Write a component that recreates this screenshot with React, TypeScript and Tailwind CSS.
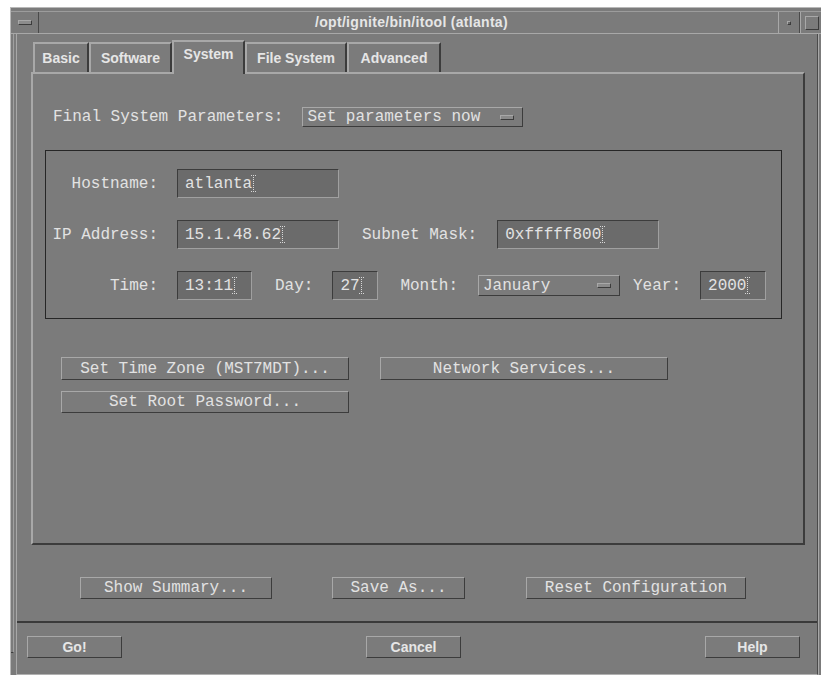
import React from 'react';

const mono = "font-['Liberation_Mono',monospace] text-[16px] text-[#e2e2e2]";
const sans = "font-['Liberation_Sans',Arial,sans-serif] font-bold text-[14px] text-[#e6e6e6]";
const raised = 'border border-t-[#a8a8a8] border-l-[#a8a8a8] border-b-[#3c3c3c] border-r-[#3c3c3c]';
const sunken = 'border border-t-[#3c3c3c] border-l-[#3c3c3c] border-b-[#a0a0a0] border-r-[#a0a0a0]';

const IBeam = () => (
  <svg width="5" height="17" viewBox="0 0 5 17" className="shrink-0 -ml-[1px]">
    <path d="M0 0.5h5M0 16.5h5M2.5 0v17" stroke="#d8d8d8" strokeWidth="1" strokeDasharray="1 1" />
  </svg>
);

const Field = ({ value, w }: { value: string; w: string }) => (
  <div className={`${sunken} ${w} h-[29px] bg-[#6b6b6b] flex items-center pl-[7px]`}>
    <span className={mono}>{value}</span>
    <IBeam />
  </div>
);

const OptionMenu = ({ value, w, h }: { value: string; w: string; h: string }) => (
  <div className={`${raised} ${w} ${h} flex items-center justify-between pl-[4px] pr-[8px]`}>
    <span className={`${mono} leading-none`}>{value}</span>
    <span className={`${raised} w-[14px] h-[5px] bg-[#8a8a8a]`} />
  </div>
);

const Button = ({ label, w, h = 'h-[23px]', bold = false }: { label: string; w: string; h?: string; bold?: boolean }) => (
  <div className={`${raised} ${w} ${h} flex items-center justify-center whitespace-pre ${bold ? sans : mono}`}>
    {label}
  </div>
);

const tabs = [
  { name: 'Basic', w: 'w-[56px]' },
  { name: 'Software', w: 'w-[83px]' },
  { name: 'System', w: 'w-[73px]', active: true },
  { name: 'File System', w: 'w-[102px]' },
  { name: 'Advanced', w: 'w-[94px]' },
];

export default function App() {
  return (
    <div className="w-[821px] h-[675px] bg-white pl-[10px] pt-[7px] overflow-hidden">
      <div className="w-[813px] h-[668px] bg-[#7b7b7b] border-l border-t border-[#b8b8b8] flex flex-col">
        {/* window frame top */}
        <div className="h-[4px] border-b border-[#9c9c9c]" />

        {/* title bar */}
        <div className="h-[22px] flex border-b border-[#a8a8a8]">
          <div className="w-[28px] border-r border-[#4a4a4a] flex items-center justify-center">
            <span className={`${raised} w-[14px] h-[5px] bg-[#8c8c8c]`} />
          </div>
          <div className={`flex-1 flex items-center justify-center pl-[6px] ${sans} tracking-[0.3px]`}>
            /opt/ignite/bin/itool (atlanta)
          </div>
          <div className="w-[22px] border-l border-[#a8a8a8] border-r border-r-[#4a4a4a] flex items-center justify-center">
            <span className={`${raised} w-[4px] h-[4px] bg-[#6a6a6a]`} />
          </div>
          <div className="w-[23px] border-l border-[#a8a8a8] flex items-center pl-[4px]">
            <span className={`${raised} w-[14px] h-[14px]`} />
          </div>
        </div>

        <div className="flex-1 flex">
          {/* left frame */}
          <div className="w-[6px] border-r border-[#a8a8a8] flex flex-col">
            <div className="flex-1 border-b border-[#3c3c3c] mr-[2px] border-r border-r-[#a0a0a0]" />
            <div className="h-[22px]" />
          </div>

          {/* client area */}
          <div className="w-[801px] flex flex-col border-r border-[#4a4a4a] border-b border-b-[#b0b0b0]">
            {/* tab row */}
            <div className="h-[38px] flex items-end pl-[16px] relative z-10">
              {tabs.map((t) =>
                t.active ? (
                  <div
                    key={t.name}
                    className={`${t.w} h-[34px] -mb-[2px] bg-[#7b7b7b] border-2 border-b-0 border-t-[#a8a8a8] border-l-[#a8a8a8] border-r-[#3c3c3c] flex items-start justify-center pt-[2px] ${sans}`}
                  >
                    {t.name}
                  </div>
                ) : (
                  <div
                    key={t.name}
                    className={`${t.w} h-[30px] border-2 border-b-0 border-t-[#a8a8a8] border-l-[#a8a8a8] border-r-[#3c3c3c] flex items-center justify-center ${sans}`}
                  >
                    {t.name}
                  </div>
                )
              )}
            </div>

            {/* System page */}
            <div className="ml-[14px] w-[774px] h-[473px] border-2 border-t-[#a8a8a8] border-l-[#a8a8a8] border-b-[#3c3c3c] border-r-[#3c3c3c] pt-[33px] pl-[12px]">
              <div className="flex items-center h-[20px] pl-[8px]">
                <span className={`${mono} whitespace-pre`}>Final System Parameters:</span>
                <div className="ml-[19px]">
                  <OptionMenu value="Set parameters now" w="w-[221px]" h="h-[20px]" />
                </div>
              </div>

              <div className="mt-[23px] w-[737px] h-[169px] border border-[#262626] pt-[18px] flex flex-col gap-[22px]">
                <div className="flex items-center">
                  <span className={`${mono} w-[112px] text-right`}>Hostname:</span>
                  <div className="ml-[19px]">
                    <Field value="atlanta" w="w-[162px]" />
                  </div>
                </div>
                <div className="flex items-center">
                  <span className={`${mono} w-[112px] text-right whitespace-pre`}>IP Address:</span>
                  <div className="ml-[19px]">
                    <Field value="15.1.48.62" w="w-[162px]" />
                  </div>
                  <span className={`${mono} ml-[23px] whitespace-pre`}>Subnet Mask:</span>
                  <div className="ml-[20px]">
                    <Field value="0xfffff800" w="w-[162px]" />
                  </div>
                </div>
                <div className="flex items-center">
                  <span className={`${mono} w-[112px] text-right`}>Time:</span>
                  <div className="ml-[19px]">
                    <Field value="13:11" w="w-[75px]" />
                  </div>
                  <span className={`${mono} ml-[23px]`}>Day:</span>
                  <div className="ml-[19px]">
                    <Field value="27" w="w-[46px]" />
                  </div>
                  <span className={`${mono} ml-[22px]`}>Month:</span>
                  <div className="ml-[20px]">
                    <OptionMenu value="January" w="w-[142px]" h="h-[21px]" />
                  </div>
                  <span className={`${mono} ml-[13px]`}>Year:</span>
                  <div className="ml-[19px]">
                    <Field value="2000" w="w-[66px]" />
                  </div>
                </div>
              </div>

              <div className="mt-[38px] ml-[16px] flex flex-col gap-[11px]">
                <div className="flex gap-[31px]">
                  <Button label="Set Time Zone (MST7MDT)..." w="w-[288px]" />
                  <Button label="Network Services..." w="w-[288px]" />
                </div>
                <Button label="Set Root Password..." w="w-[288px]" h="h-[22px]" />
              </div>
            </div>

            {/* summary / save / reset */}
            <div className="h-[76px] flex pl-[63px] pt-[32px]">
              <Button label="Show Summary..." w="w-[192px]" h="h-[22px]" />
              <div className="ml-[60px]">
                <Button label="Save As..." w="w-[133px]" h="h-[22px]" />
              </div>
              <div className="ml-[61px]">
                <Button label="Reset Configuration" w="w-[220px]" h="h-[22px]" />
              </div>
            </div>

            {/* action area */}
            <div className="flex-1 border-t-2 border-[#3a3a3a] pt-[13px] pl-[10px] flex">
              <Button label="Go!" w="w-[95px]" h="h-[22px]" bold />
              <div className="ml-[244px]">
                <Button label="Cancel" w="w-[95px]" h="h-[22px]" bold />
              </div>
              <div className="ml-[244px]">
                <Button label="Help" w="w-[95px]" h="h-[22px]" bold />
              </div>
            </div>
          </div>

          {/* right frame */}
          <div className="flex-1 border-l border-[#a8a8a8]" />
        </div>
      </div>
    </div>
  );
}
